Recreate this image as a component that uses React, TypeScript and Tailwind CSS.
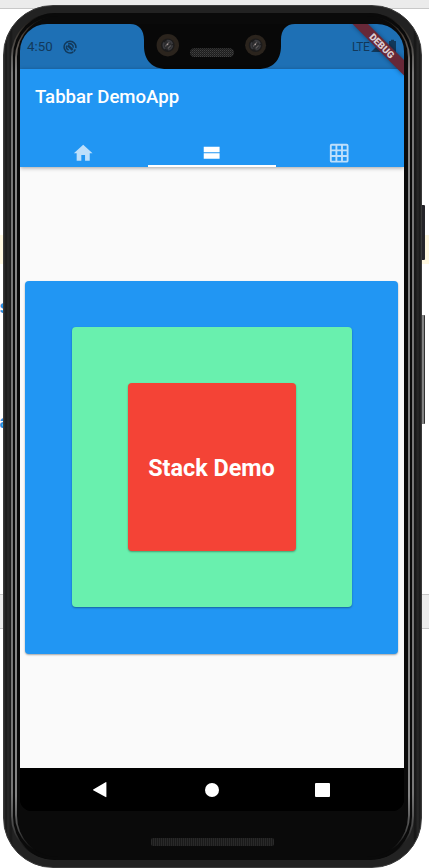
import React from "react";

function Desktop() {
  return (
    <div className="[grid-area:1/1] flex h-[868px] w-[429px] flex-col bg-white">
      <div className="h-[9px] shrink-0 border-b border-[#c8c8c8] bg-[#ebebeb]" />
      <div className="h-[226px] shrink-0" />
      <div className="h-[29px] shrink-0 bg-[#fff8e1]" />
      <div className="h-[330px] shrink-0 pt-[32px] font-['Liberation_Mono',monospace] text-[18px] font-bold leading-[24px] text-[#2590e0]">
        <div className="-ml-[1px]">s</div>
        <div className="-ml-[1px] mt-[91px]">a</div>
      </div>
      <div className="h-[35px] shrink-0 border-y border-[#c8c8c8] bg-[#ececec]" />
    </div>
  );
}

function Camera({ cx, r }: { cx: number; r: number }) {
  return (
    <g>
      <circle cx={cx} cy="21.2" r={r} fill="#2b241d" />
      <circle cx={cx} cy="21.2" r="6.8" fill="#1c1b1b" />
      <circle cx={cx} cy="21.2" r="4.6" fill="#2b2b2d" stroke="#3a3a3e" strokeWidth="1.6" strokeDasharray="7 3" />
      <path d={`M${cx - 2.5} 22.5l4-4.5M${cx} 24.5l3-3`} stroke="#5a5757" strokeWidth="1.2" />
      <circle cx={cx - 0.3} cy="20.4" r="0.8" fill="#a89a98" />
    </g>
  );
}

function Notch() {
  return (
    <svg className="shrink-0" width="165" height="45" viewBox="0 0 165 45">
      <defs>
        <pattern id="mesh" width="2" height="2" patternUnits="userSpaceOnUse">
          <rect width="2" height="2" fill="#1d1d1d" />
          <rect width="1" height="1" fill="#414141" />
          <rect x="1" y="1" width="1" height="1" fill="#303030" />
        </pattern>
      </defs>
      <path d="M0 0C9 0 14 6 14 16V22C14 36 22 45 37 45H128C143 45 151 36 151 22V16C151 6 156 0 165 0Z" fill="#080808" />
      <Camera cx={37.8} r={11.2} />
      <Camera cx={125.6} r={10.5} />
      <rect x="60" y="24.2" width="44" height="8.8" rx="4.2" fill="url(#mesh)" />
    </svg>
  );
}

function StatusBar() {
  return (
    <div className="flex h-[45px] shrink-0 bg-[#1e70b5] font-[Roboto,sans-serif] text-[#12395b]">
      <div className="flex w-[110px] shrink-0 items-start pl-[7px] pt-[14px]">
        <span className="w-[36px] text-[13.3px] leading-[18px]">4:50</span>
        <svg width="14" height="14" viewBox="0 0 14 14" className="mt-[1.5px]" fill="none" stroke="currentColor">
          <path d="M10.2 12A5.9 5.9 0 1 1 12.8 8.2" strokeWidth="1.5" />
          <path d="M5.6 10A3.4 3.4 0 0 1 3.8 5.6M5.2 4.1A3.4 3.4 0 0 1 10.2 7.6" strokeWidth="1.5" />
          <path d="M4.8 5.4L9.6 9.8" strokeWidth="2.4" />
          <path d="M12.4 9.4l-1.6 2.2" strokeWidth="1.5" />
        </svg>
      </div>
      <Notch />
      <div className="flex grow items-start pl-[57px] pt-[14px]">
        <span className="w-[19px] text-[12px] leading-[18px] tracking-[-0.5px]">LTE</span>
        <svg width="27" height="14" viewBox="0 0 27 14" className="mt-[1px]" fill="currentColor">
          <path d="M0 13L12 1V13Z" />
          <path d="M18 2h2V.7h3V2h2v11h-7z" />
        </svg>
      </div>
    </div>
  );
}

function DebugBanner() {
  return (
    <svg className="absolute right-0 top-0 z-20" width="60" height="60" viewBox="0 0 60 60">
      <defs>
        <filter id="soft" x="-30%" y="-30%" width="160%" height="160%">
          <feGaussianBlur stdDeviation="2.2" />
        </filter>
      </defs>
      <path d="M8 0H24L60 36V52Z" fill="#000" opacity=".35" filter="url(#soft)" />
      <path d="M8.5 0H24L60 36V51.5Z" fill="#672838" />
      <text
        transform="translate(38 21.8) rotate(45)"
        y="3.5"
        textAnchor="middle"
        fill="#dccfd3"
        className="font-[Roboto,sans-serif] text-[9.6px] font-black"
      >
        DEBUG
      </text>
    </svg>
  );
}

function TabIcon({ d, active = false }: { d: string; active?: boolean }) {
  return (
    <div className={active ? "flex h-full flex-1 justify-center border-b-2 border-white pr-[1px] pt-[10px]" : "flex h-full flex-1 justify-center pr-[1px] pt-[10px] opacity-70"}>
      <svg width="22.4" height="22.4" viewBox="0 0 24 24" fill="white">
        <path d={d} />
      </svg>
    </div>
  );
}

function AppBar() {
  return (
    <header className="z-10 flex h-[98px] shrink-0 flex-col bg-[#2196f3] shadow-[0_1px_4px_rgba(0,0,0,0.35)]">
      <h1 className="h-[63px] shrink-0 pl-[15px] pt-[16px] font-[Roboto,sans-serif] text-[18.6px] font-medium leading-[24px] text-white">
        Tabbar DemoApp
      </h1>
      <nav className="flex h-[35px] shrink-0">
        <TabIcon d="M10 20v-6h4v6h5v-8h3L12 3 2 12h3v8z" />
        <TabIcon active d="M4 18h17v-6H4v6zM4 5v6h17V5H4z" />
        <TabIcon d="M20 2H4c-1.1 0-2 .9-2 2v16c0 1.1.9 2 2 2h16c1.1 0 2-.9 2-2V4c0-1.1-.9-2-2-2zM8 20H4v-4h4v4zm0-6H4v-4h4v4zm0-6H4V4h4v4zm6 12h-4v-4h4v4zm0-6h-4v-4h4v4zm0-6h-4V4h4v4zm6 12h-4v-4h4v4zm0-6h-4v-4h4v4zm0-6h-4V4h4v4z" />
      </nav>
    </header>
  );
}

function StackDemo() {
  return (
    <main className="flex h-[601px] shrink-0 items-center justify-center bg-[#fafafa] pr-[1px]">
      <div className="flex size-[373px] items-center justify-center rounded-[4px] bg-[#2196f3] pb-[1px] shadow-[0_1px_2px_rgba(0,0,0,0.35)]">
        <div className="flex size-[280px] items-center justify-center rounded-[4px] bg-[#69f0ae] shadow-[0_1px_2px_rgba(0,0,0,0.35)]">
          <div className="flex size-[168px] items-center justify-center rounded-[4px] bg-[#f44336] shadow-[0_1px_2px_rgba(0,0,0,0.35)]">
            <span className="whitespace-nowrap pt-[1px] font-[Roboto,sans-serif] text-[23.4px] font-bold leading-[28px] text-white">Stack Demo</span>
          </div>
        </div>
      </div>
    </main>
  );
}

function NavBar() {
  return (
    <div className="flex h-[43px] shrink-0 items-center bg-black pl-[72px] pt-[1px]">
      <svg width="16" height="18" viewBox="0 0 16 18" fill="white">
        <path d="M1.2 8.4L13.6 1.2Q14.4 .8 14.4 1.6V15.6Q14.4 16.4 13.6 16L1.2 9.3Q.5 8.8 1.2 8.4Z" />
      </svg>
      <div className="ml-[96.5px] size-[14px] rounded-full bg-white" />
      <div className="ml-[96.5px] size-[14.5px] rounded-[1px] bg-white" />
    </div>
  );
}

function Phone() {
  return (
    <div className="[grid-area:1/1] flex h-[868px] w-[429px] pl-[3px] pt-[5px]">
      <div className="h-[863px] w-[419px] shrink-0 rounded-[50px] border border-[#3a3a3a] bg-[linear-gradient(90deg,#303030_0px,#181818_2px,#292929_4px,#171717_7px,#222_9px,#222_409px,#151515_411px,#292929_414px,#181818_416px,#303030)] p-[7px]">
        <div className="h-[847px] rounded-[44px] bg-[linear-gradient(180deg,#0a0a0a,#3a3530_18px,#777_60px,#777_780px,#444_815px,#0a0a0a_840px)] px-[2px]">
          <div className="h-[847px] rounded-[43px] bg-[#0a0a0a] px-[2px] py-[3px]">
            <div className="h-[841px] rounded-[42px] bg-[linear-gradient(180deg,#0a0a0a,#4a4038_18px,#858585_55px,#858585_780px,#444_815px,#0a0a0a_834px)] px-[2px]">
              <div className="h-[841px] rounded-[41px] bg-[#0a0a0a] pl-[3px] pr-[4px] pt-[8px]">
                <div className="relative flex h-[787px] w-[384px] flex-col overflow-hidden rounded-b-[12px] rounded-t-[27px] bg-black">
                  <StatusBar />
                  <AppBar />
                  <StackDemo />
                  <NavBar />
                  <DebugBanner />
                </div>
                <div className="mx-auto mt-[27px] h-[8px] w-[123px] rounded-[2px] bg-[repeating-linear-gradient(90deg,#292929_0_1px,#1a1a1a_1px_2px)]" />
              </div>
            </div>
          </div>
        </div>
      </div>
      <div className="flex flex-col">
        <div className="mt-[200px] h-[55px] w-[3px] rounded-r-[1px] bg-[#252429]" />
        <div className="mt-[55px] h-[109px] w-[3px] rounded-r-[1px] border-r border-[#333] bg-[#858585]" />
      </div>
    </div>
  );
}

export default function App() {
  return (
    <div className="grid h-[868px] w-[429px] overflow-hidden">
      <Desktop />
      <Phone />
    </div>
  );
}
